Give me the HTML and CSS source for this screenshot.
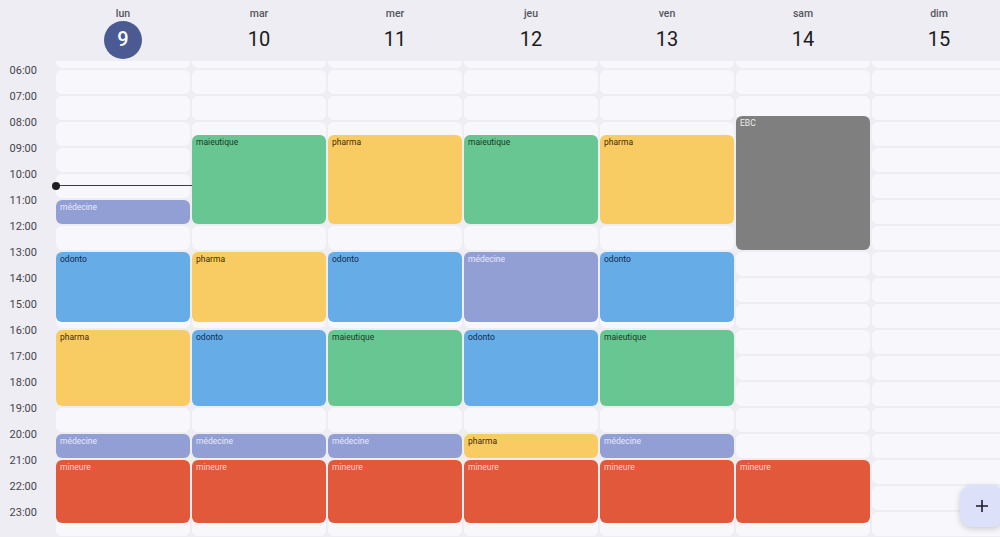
FILE: index.html
```html
<!DOCTYPE html>
<html>
<head>
	<title>Semaine</title>
	<link rel="stylesheet" href="styles.css">
</head>
<body>
	<div class="page">
		<header class="week-head">
			<div class="gutter"></div>
			<div class="day-head">
				<span class="day-name">lun</span>
				<span class="day-num today">9</span>
			</div>
			<div class="day-head">
				<span class="day-name">mar</span>
				<span class="day-num">10</span>
			</div>
			<div class="day-head">
				<span class="day-name">mer</span>
				<span class="day-num">11</span>
			</div>
			<div class="day-head">
				<span class="day-name">jeu</span>
				<span class="day-num">12</span>
			</div>
			<div class="day-head">
				<span class="day-name">ven</span>
				<span class="day-num">13</span>
			</div>
			<div class="day-head">
				<span class="day-name">sam</span>
				<span class="day-num">14</span>
			</div>
			<div class="day-head">
				<span class="day-name">dim</span>
				<span class="day-num">15</span>
			</div>
		</header>

		<main class="scroller">
			<div class="week-body">
				<div class="times">
					<span>06:00</span><span>07:00</span><span>08:00</span><span>09:00</span>
					<span>10:00</span><span>11:00</span><span>12:00</span><span>13:00</span>
					<span>14:00</span><span>15:00</span><span>16:00</span><span>17:00</span>
					<span>18:00</span><span>19:00</span><span>20:00</span><span>21:00</span>
					<span>22:00</span><span>23:00</span>
				</div>

				<!-- lun -->
				<div class="day">
					<div class="slots"></div>
					<div class="event medecine" style="top:156px;height:24px">médecine</div>
					<div class="event odonto" style="top:208px;height:69.5px">odonto</div>
					<div class="event pharma" style="top:286px;height:76px">pharma</div>
					<div class="event medecine" style="top:390px;height:24px">médecine</div>
					<div class="event mineure" style="top:416px;height:63px">mineure</div>
					<div class="now-line" style="top:141px"></div>
				</div>

				<!-- mar -->
				<div class="day">
					<div class="slots"></div>
					<div class="event maieutique" style="top:91px;height:89px">maieutique</div>
					<div class="event pharma" style="top:208px;height:69.5px">pharma</div>
					<div class="event odonto" style="top:286px;height:76px">odonto</div>
					<div class="event medecine" style="top:390px;height:24px">médecine</div>
					<div class="event mineure" style="top:416px;height:63px">mineure</div>
				</div>

				<!-- mer -->
				<div class="day">
					<div class="slots"></div>
					<div class="event pharma" style="top:91px;height:89px">pharma</div>
					<div class="event odonto" style="top:208px;height:69.5px">odonto</div>
					<div class="event maieutique" style="top:286px;height:76px">maieutique</div>
					<div class="event medecine" style="top:390px;height:24px">médecine</div>
					<div class="event mineure" style="top:416px;height:63px">mineure</div>
				</div>

				<!-- jeu -->
				<div class="day">
					<div class="slots"></div>
					<div class="event maieutique" style="top:91px;height:89px">maieutique</div>
					<div class="event medecine" style="top:208px;height:69.5px">médecine</div>
					<div class="event odonto" style="top:286px;height:76px">odonto</div>
					<div class="event pharma" style="top:390px;height:24px">pharma</div>
					<div class="event mineure" style="top:416px;height:63px">mineure</div>
				</div>

				<!-- ven -->
				<div class="day">
					<div class="slots"></div>
					<div class="event pharma" style="top:91px;height:89px">pharma</div>
					<div class="event odonto" style="top:208px;height:69.5px">odonto</div>
					<div class="event maieutique" style="top:286px;height:76px">maieutique</div>
					<div class="event medecine" style="top:390px;height:24px">médecine</div>
					<div class="event mineure" style="top:416px;height:63px">mineure</div>
				</div>

				<!-- sam -->
				<div class="day">
					<div class="slots"></div>
					<div class="event ebc" style="top:71.5px;height:134.5px">EBC</div>
					<div class="event mineure" style="top:416px;height:63px">mineure</div>
				</div>

				<!-- dim -->
				<div class="day">
					<div class="slots"></div>
				</div>
			</div>
		</main>

		<button class="fab" aria-label="Ajouter">
			<svg width="14" height="14" viewBox="0 0 14 14">
				<path d="M7 1v12M1 7h12" stroke="#1b1d2c" stroke-width="1.6" fill="none"/>
			</svg>
		</button>
	</div>

	<script>
		// one empty slot per hour, 05:00 to 23:00
		document.querySelectorAll('.slots').forEach(col => {
			for (let h = 5; h <= 23; h++) {
				const cell = document.createElement('div');
				cell.className = 'slot';
				col.appendChild(cell);
			}
		});
	</script>
</body>
</html>
```

FILE: styles.css
```css
body {
  margin: 0;
  font-family: Roboto, "Noto Sans", Arial, sans-serif;
  background-color: #eeedf3;
  overflow: hidden;
}

.page {
  position: relative;
  width: 1000px;
  height: 537px;
  overflow: hidden;
}

/* header row */

.week-head {
  display: flex;
  gap: 2px;
  height: 61px;
}

.gutter {
  width: 54px;
  flex: none;
}

.day-head {
  width: 134px;
  flex: none;
  display: flex;
  flex-direction: column;
  align-items: center;
  padding-top: 6px;
}

.day-name {
  font-size: 10.5px;
  line-height: 16px;
  font-weight: 500;
  color: #55555e;
}

.day-num {
  width: 38px;
  height: 36px;
  line-height: 34px;
  text-align: center;
  font-size: 20px;
  color: #1b1b20;
}

.day-num.today {
  height: 38px;
  line-height: 37px;
  margin-top: -1px;
  border-radius: 50%;
  background-color: #4b5a93;
  color: #fff;
  font-weight: 500;
}

/* grid */

.scroller {
  height: 476px;
  overflow: hidden;
}

.week-body {
  display: flex;
  gap: 2px;
  margin-top: -17px;
}

.times {
  width: 54px;
  flex: none;
  display: flex;
  flex-direction: column;
  padding-top: 14px;
}

.times span {
  height: 26px;
  line-height: 26px;
  text-align: right;
  padding-right: 17px;
  font-size: 11px;
  color: #45454d;
}

.day {
  position: relative;
  width: 134px;
  flex: none;
}

.slots {
  display: flex;
  flex-direction: column;
  gap: 2px;
}

.slot {
  height: 24px;
  border-radius: 6px;
  background-color: #f8f8fc;
}

.event {
  position: absolute;
  left: 0;
  right: 0;
  box-sizing: border-box;
  padding: 2px 4px;
  border-radius: 6px;
  font-size: 8.5px;
  line-height: 10px;
  overflow: hidden;
}

.maieutique {
  background-color: #68c693;
  color: #163a24;
}

.pharma {
  background-color: #f9cb63;
  color: #3d2c05;
}

.odonto {
  background-color: #66ace6;
  color: #0f2b50;
}

.medecine {
  background-color: #929fd5;
  color: #e6e9fb;
}

.mineure {
  background-color: #e2583a;
  color: #fad2c6;
}

.ebc {
  background-color: #7f7f7f;
  color: #ececec;
}

.now-line {
  position: absolute;
  left: 0;
  width: 136px;
  height: 1px;
  background-color: #3c3c44;
}

.now-line::before {
  content: "";
  position: absolute;
  left: -4px;
  top: -3.5px;
  width: 8px;
  height: 8px;
  border-radius: 50%;
  background-color: #1d1d22;
}

.fab {
  position: absolute;
  left: 960px;
  top: 485px;
  width: 44px;
  height: 42px;
  border: none;
  border-radius: 12px;
  background-color: #dde0f9;
  box-shadow: 0 2px 6px rgba(0, 0, 0, 0.18);
  display: flex;
  align-items: center;
  justify-content: center;
  padding: 0;
  cursor: pointer;
}
```
